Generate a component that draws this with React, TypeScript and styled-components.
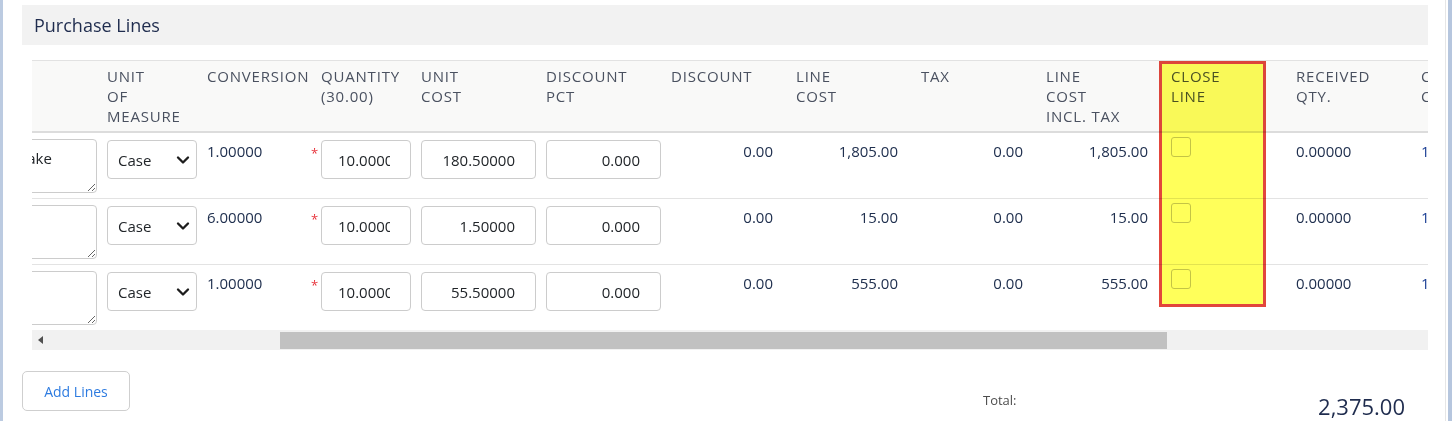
import { useLayoutEffect, useRef } from "react";
import styled, { createGlobalStyle } from "styled-components";
import { ChevronDown } from "lucide-react";

const GlobalStyle = createGlobalStyle`
  html, body {
    margin: 0;
    padding: 0;
    background: #fff;
  }
  body {
    font-family: "Open Sans", "Liberation Sans", sans-serif;
    color: #20304f;
  }
  * {
    box-sizing: border-box;
  }
`;

const Frame = styled.div`
  display: flex;
  min-height: 100vh;
  border-left: 3px solid #bccbe1;
  border-right: 4px solid #b6c6de;
`;

const Panel = styled.div`
  flex: 1;
  min-width: 0;
  margin-right: 2px;
  border-right: 1px solid #e6e6e6;
  padding: 5px 17px 0 19px;
`;

const SectionHeader = styled.h2`
  margin: 0;
  height: 40px;
  padding-left: 12px;
  background: #f2f2f2;
  font-size: 18px;
  font-weight: 400;
  line-height: 40px;
  color: #1f2c4e;
`;

const Grid = styled.div`
  margin: 15px 0 0 10px;
`;

const Viewport = styled.div`
  overflow: hidden;
`;

const Table = styled.table<{ $width: number }>`
  width: ${(p) => p.$width}px;
  table-layout: fixed;
  border-collapse: collapse;
`;

const HeadRow = styled.tr`
  border-top: 1px solid #e2e2e2;
  border-bottom: 2px solid #dcdcdc;
`;

const Th = styled.th`
  position: relative;
  padding: 5px;
  background: #f9f9f8;
  text-align: left;
  vertical-align: top;
  font-size: 15px;
  font-weight: 400;
  line-height: 20px;
  letter-spacing: 0.8px;
  text-transform: uppercase;
  color: #4a5160;
  white-space: nowrap;
`;

const HeadLine = styled.span`
  display: block;
`;

const BodyRow = styled.tr`
  border-bottom: 1px solid #e3e3e3;

  &:last-child {
    border-bottom: none;
  }
`;

const Td = styled.td`
  padding: 6px 5px 5px;
  vertical-align: top;
`;

const Value = styled.div<{ $align?: "left" | "right"; $tone?: "link" }>`
  padding: 2px ${(p) => (p.$align === "right" ? "13px" : "0")} 0 0;
  font-size: 15px;
  line-height: 20px;
  text-align: ${(p) => p.$align ?? "left"};
  color: ${(p) => (p.$tone === "link" ? "#1c3f94" : "#20304f")};
  white-space: nowrap;
`;

const Notes = styled.textarea`
  display: block;
  width: 190px;
  height: 54px;
  padding: 8px;
  border: 1px solid #cccccc;
  border-radius: 4px;
  font-family: inherit;
  font-size: 15px;
  line-height: 20px;
  color: #212529;
`;

const SelectWrap = styled.div`
  position: relative;
  width: 90px;
  margin-top: 1px;
`;

const Select = styled.select`
  display: block;
  width: 100%;
  height: 39px;
  padding: 0 24px 0 10px;
  border: 1px solid #cccccc;
  border-radius: 4px;
  background: #fff;
  appearance: none;
  font-family: inherit;
  font-size: 15px;
  color: #212529;
`;

const Caret = styled(ChevronDown)`
  position: absolute;
  top: 50%;
  right: 4px;
  transform: translateY(-50%);
  pointer-events: none;
  color: #1d1d1d;
`;

const Required = styled.div`
  position: relative;
  margin-top: 1px;

  &::before {
    content: "*";
    position: absolute;
    left: -10px;
    top: 3px;
    font-size: 13px;
    line-height: 20px;
    color: #e8363e;
  }
`;

const NumberInput = styled.input<{ $align?: "left" | "right" }>`
  display: block;
  width: 100%;
  height: 39px;
  margin-top: 1px;
  padding: 0 20px 0 16px;
  border: 1px solid #cccccc;
  border-radius: 4px;
  background: #fff;
  font-family: inherit;
  font-size: 15px;
  text-align: ${(p) => p.$align ?? "right"};
  color: #212529;

  ${Required} > & {
    margin-top: 0;
  }
`;

const Check = styled.input`
  display: block;
  width: 20px;
  height: 20px;
  margin: -2px 0 0;
  border: 1px solid #c4c4c4;
  border-radius: 3px;
  background: #fff;
  appearance: none;
`;

// marker drawn over the close-line column
const Highlight = styled.div`
  position: absolute;
  top: 0;
  left: -7px;
  width: 107px;
  height: 246px;
  border: 3px solid #e2463c;
  background: #ffff5a;
  mix-blend-mode: multiply;
  z-index: 1;
  pointer-events: none;
`;

const Track = styled.div`
  display: flex;
  align-items: center;
  height: 20px;
  background: #f1f1f1;
`;

const ArrowButton = styled.div`
  display: flex;
  align-items: center;
  justify-content: center;
  width: 17px;
  height: 100%;

  &::before {
    content: "";
    border-top: 4px solid transparent;
    border-bottom: 4px solid transparent;
    border-right: 5px solid #505050;
  }
`;

const Thumb = styled.div<{ $offset: number; $size: number }>`
  height: 17px;
  margin-left: ${(p) => p.$offset}px;
  width: ${(p) => p.$size}px;
  background: #c1c1c1;
`;

const Footer = styled.div`
  display: flex;
  justify-content: space-between;
  align-items: flex-start;
  margin-top: 21px;
`;

const AddButton = styled.button`
  width: 108px;
  height: 40px;
  border: 1px solid #cfcfcf;
  border-radius: 5px;
  background: #fff;
  font-family: inherit;
  font-size: 14px;
  color: #2d7be0;
`;

const Totals = styled.div`
  display: flex;
  width: 422px;
  margin-right: 23px;
  padding-top: 20px;
`;

const TotalLabel = styled.div`
  flex: 1;
  font-size: 13px;
  line-height: 18px;
  color: #4d4d4d;
`;

const TotalAmount = styled.div`
  font-size: 22px;
  line-height: 30px;
  color: #1f2c4e;
`;

type Line = {
  desc: string;
  conversion: string;
  qty: string;
  unitCost: string;
  discPct: string;
  discount: string;
  lineCost: string;
  tax: string;
  incl: string;
  received: string;
  cases: string;
};

type Column = {
  key: string;
  head: string[];
  width: number;
  cell: (l: Line) => React.ReactNode;
  marked?: boolean;
};

const lines: Line[] = [
  {
    desc: "Lemon Pound Cake",
    conversion: "1.00000",
    qty: "10.00000",
    unitCost: "180.50000",
    discPct: "0.000",
    discount: "0.00",
    lineCost: "1,805.00",
    tax: "0.00",
    incl: "1,805.00",
    received: "0.00000",
    cases: "10.00000",
  },
  {
    desc: "Cream Cheese",
    conversion: "6.00000",
    qty: "10.00000",
    unitCost: "1.50000",
    discPct: "0.000",
    discount: "0.00",
    lineCost: "15.00",
    tax: "0.00",
    incl: "15.00",
    received: "0.00000",
    cases: "10.00000",
  },
  {
    desc: "Vanilla Bean",
    conversion: "1.00000",
    qty: "10.00000",
    unitCost: "55.50000",
    discPct: "0.000",
    discount: "0.00",
    lineCost: "555.00",
    tax: "0.00",
    incl: "555.00",
    received: "0.00000",
    cases: "10.00000",
  },
];

const columns: Column[] = [
  {
    key: "desc",
    head: ["Description"],
    width: 200,
    cell: (l) => <Notes defaultValue={l.desc} />,
  },
  {
    key: "uom",
    head: ["Unit", "of", "Measure"],
    width: 100,
    cell: () => (
      <SelectWrap>
        <Select defaultValue="Case">
          <option>Case</option>
          <option>Each</option>
        </Select>
        <Caret size={20} strokeWidth={2.8} />
      </SelectWrap>
    ),
  },
  {
    key: "conversion",
    head: ["Conversion"],
    width: 114,
    cell: (l) => <Value>{l.conversion}</Value>,
  },
  {
    key: "qty",
    head: ["Quantity", "(30.00)"],
    width: 100,
    cell: (l) => (
      <Required>
        <NumberInput $align="left" defaultValue={l.qty} />
      </Required>
    ),
  },
  {
    key: "unitCost",
    head: ["Unit", "Cost"],
    width: 125,
    cell: (l) => <NumberInput defaultValue={l.unitCost} />,
  },
  {
    key: "discPct",
    head: ["Discount", "Pct"],
    width: 125,
    cell: (l) => <NumberInput defaultValue={l.discPct} />,
  },
  {
    key: "discount",
    head: ["Discount"],
    width: 125,
    cell: (l) => <Value $align="right">{l.discount}</Value>,
  },
  {
    key: "lineCost",
    head: ["Line", "Cost"],
    width: 125,
    cell: (l) => <Value $align="right">{l.lineCost}</Value>,
  },
  {
    key: "tax",
    head: ["Tax"],
    width: 125,
    cell: (l) => <Value $align="right">{l.tax}</Value>,
  },
  {
    key: "incl",
    head: ["Line", "Cost", "Incl. Tax"],
    width: 125,
    cell: (l) => <Value $align="right">{l.incl}</Value>,
  },
  {
    key: "close",
    head: ["Close", "Line"],
    width: 125,
    marked: true,
    cell: () => <Check type="checkbox" />,
  },
  {
    key: "received",
    head: ["Received", "Qty."],
    width: 125,
    cell: (l) => <Value>{l.received}</Value>,
  },
  {
    key: "cases",
    head: ["Cases", "Counted"],
    width: 125,
    cell: (l) => <Value $tone="link">{l.cases}</Value>,
  },
  {
    key: "remaining",
    head: ["Remaining", "Qty."],
    width: 125,
    cell: (l) => <Value>{l.qty}</Value>,
  },
];

const SCROLL_LEFT = 130;
const ARROW = 17;

const PurchaseLines = () => {
  const viewport = useRef<HTMLDivElement>(null);
  const tableWidth = columns.reduce((sum, c) => sum + c.width, 0);
  const viewWidth = 1396;
  const trackInner = viewWidth - ARROW * 2;
  const thumbSize = Math.round((viewWidth / 2144) * trackInner);
  const thumbOffset = 231;

  useLayoutEffect(() => {
    if (viewport.current) viewport.current.scrollLeft = SCROLL_LEFT;
  }, []);

  return (
    <Grid>
      <Viewport ref={viewport}>
        <Table $width={tableWidth}>
          <colgroup>
            {columns.map((c) => (
              <col key={c.key} style={{ width: c.width }} />
            ))}
          </colgroup>
          <thead>
            <HeadRow>
              {columns.map((c) => (
                <Th key={c.key}>
                  {c.head.map((h) => (
                    <HeadLine key={h}>{h}</HeadLine>
                  ))}
                  {c.marked && <Highlight />}
                </Th>
              ))}
            </HeadRow>
          </thead>
          <tbody>
            {lines.map((l, i) => (
              <BodyRow key={i}>
                {columns.map((c) => (
                  <Td key={c.key}>{c.cell(l)}</Td>
                ))}
              </BodyRow>
            ))}
          </tbody>
        </Table>
      </Viewport>
      <Track>
        <ArrowButton />
        <Thumb $offset={thumbOffset} $size={thumbSize} />
      </Track>
    </Grid>
  );
};

export default function App() {
  return (
    <>
      <GlobalStyle />
      <Frame>
        <Panel>
          <SectionHeader>Purchase Lines</SectionHeader>
          <PurchaseLines />
          <Footer>
            <AddButton>Add Lines</AddButton>
            <Totals>
              <TotalLabel>Total:</TotalLabel>
              <TotalAmount>2,375.00</TotalAmount>
            </Totals>
          </Footer>
        </Panel>
      </Frame>
    </>
  );
}
